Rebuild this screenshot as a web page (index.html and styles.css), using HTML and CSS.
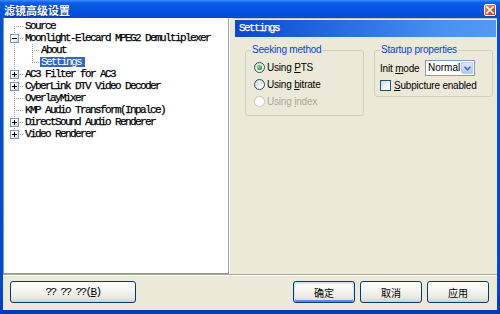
FILE: index.html
```html
<!DOCTYPE html>
<html lang="zh-CN">
<head>
    <meta charset="UTF-8">
    <title>滤镜高级设置</title>
    <link rel="stylesheet" href="styles.css">
</head>
<body>
<div class="window">
    <div class="titlebar">
        <span class="title">滤镜高级设置</span>
        <span class="close">
            <svg width="8" height="8" viewBox="0 0 8 8"><path d="M1 1L7 7M7 1L1 7" stroke="#fff" stroke-width="1.6" stroke-linecap="square"/></svg>
        </span>
    </div>
    <div class="frame">
        <div class="main">
            <div class="tree">
                <div class="row"><span class="lead first"></span><span class="label">Source</span></div>
                <div class="row"><span class="lead full"><span class="box"></span></span><span class="label">Moonlight-Elecard MPEG2 Demultiplexer</span></div>
                <div class="row"><span class="indent"></span><span class="lead full sub"></span><span class="label">About</span></div>
                <div class="row"><span class="indent"></span><span class="lead last sub"></span><span class="label selected">Settings</span></div>
                <div class="row"><span class="lead full"><span class="box plus"></span></span><span class="label">AC3 Filter for AC3</span></div>
                <div class="row"><span class="lead full"><span class="box plus"></span></span><span class="label">CyberLink DTV Video Decoder</span></div>
                <div class="row"><span class="lead full"></span><span class="label">OverlayMixer</span></div>
                <div class="row"><span class="lead full"></span><span class="label">KMP Audio Transform(Inpalce)</span></div>
                <div class="row"><span class="lead full"><span class="box plus"></span></span><span class="label">DirectSound Audio Renderer</span></div>
                <div class="row"><span class="lead last"><span class="box plus"></span></span><span class="label">Video Renderer</span></div>
            </div>
            <div class="split"></div>
            <div class="panel">
                <div class="panel-head">Settings</div>
                <div class="panel-body">
                    <fieldset class="group">
                        <legend>Seeking method</legend>
                        <div class="opt"><span class="radio on"></span><span>Using <u>P</u>TS</span></div>
                        <div class="opt"><span class="radio"></span><span>Using <u>b</u>itrate</span></div>
                        <div class="opt disabled"><span class="radio"></span><span>Using <u>i</u>ndex</span></div>
                    </fieldset>
                    <fieldset class="group startup">
                        <legend>Startup properties</legend>
                        <div class="opt tall">
                            <span class="field-label">Init <u>m</u>ode</span>
                            <span class="select">
                                <span class="value">Normal</span>
                                <span class="drop">
                                    <svg width="7" height="5" viewBox="0 0 7 5"><path d="M0.5 0.8L3.5 3.8L6.5 0.8" fill="none" stroke="#4D6185" stroke-width="1.5"/></svg>
                                </span>
                            </span>
                        </div>
                        <div class="opt short"><span class="check"></span><span><u>S</u>ubpicture enabled</span></div>
                    </fieldset>
                </div>
            </div>
        </div>
        <div class="footer">
            <button class="btn wide">?? ?? ??(<u>B</u>)</button>
            <button class="btn default">确定</button>
            <button class="btn">取消</button>
            <button class="btn">应用</button>
        </div>
    </div>
</div>
</body>
</html>
```
FILE: styles.css
```css
body {
    margin: 0;
    font-family: "Liberation Sans", Arial, sans-serif;
}
.window {
    width: 500px;
    height: 314px;
    display: flex;
    flex-direction: column;
    background: linear-gradient(to bottom, #0450D9, #0348D2 90%, #003BB8);
}
.titlebar {
    height: 18px;
    box-sizing: border-box;
    padding: 2px 4px 0 4px;
    display: flex;
    align-items: center;
    justify-content: space-between;
    background: linear-gradient(to bottom, #3A8CFF 0, #0A5CEB 3px, #0452DE 60%, #034BD6 100%);
}
.title {
    color: #fff;
    font-family: "Noto Sans CJK SC", sans-serif;
    font-weight: bold;
    font-size: 11px;
    line-height: 14px;
    text-shadow: 1px 1px 0 #0A2F8F;
}
.close {
    width: 12px;
    height: 12px;
    box-sizing: border-box;
    border: 1px solid #fff;
    border-radius: 2px;
    background: linear-gradient(135deg, #F29A7C, #DC4F25 60%, #C8391A);
    display: flex;
    align-items: center;
    justify-content: center;
}
.frame {
    flex: 1;
    margin: 0 3px 4px 3px;
    background: #ECE9D8;
    display: flex;
    flex-direction: column;
}
.main {
    height: 256px;
    display: flex;
}
/* tree */
.tree {
    width: 223px;
    background: #fff;
    border-left: 1px solid #7F9DB9;
    border-right: 1px solid #A0A0A0;
    border-bottom: 1px solid #7F9DB9;
    padding: 2px 0 0 1px;
    font-family: "Liberation Mono", "Noto Sans CJK SC", monospace;
    font-size: 11px;
    letter-spacing: -1.6px;
    -webkit-text-stroke: 0.25px;
    color: #000;
}
.row {
    height: 12px;
    display: flex;
    align-items: center;
    white-space: nowrap;
}
.indent {
    width: 16px;
    height: 12px;
    background: repeating-linear-gradient(to bottom, #A0A0A0 0 1px, transparent 1px 2px) no-repeat 9px 0 / 1px 12px;
}
.lead {
    width: 19px;
    height: 12px;
    display: flex;
    align-items: center;
    background-image:
        repeating-linear-gradient(to bottom, #A0A0A0 0 1px, transparent 1px 2px),
        repeating-linear-gradient(to right, #A0A0A0 0 1px, transparent 1px 2px);
    background-repeat: no-repeat;
    background-position: 9px 0, 9px 6px;
    background-size: 1px 12px, 10px 1px;
}
.lead.first {
    background-position: 9px 6px, 9px 6px;
    background-size: 1px 6px, 10px 1px;
}
.lead.last {
    background-size: 1px 6px, 10px 1px;
}
.lead.sub {
    background-position: 11px 0, 11px 6px;
    background-size: 1px 12px, 8px 1px;
}
.lead.last.sub {
    background-size: 1px 6px, 8px 1px;
}
.box {
    width: 9px;
    height: 9px;
    box-sizing: border-box;
    margin-left: 5px;
    border: 1px solid #7898B5;
    background:
        linear-gradient(#000, #000) center / 5px 1px no-repeat,
        linear-gradient(135deg, #fff 40%, #D8D4C8);
}
.box.plus {
    background:
        linear-gradient(#000, #000) center / 5px 1px no-repeat,
        linear-gradient(#000, #000) center / 1px 5px no-repeat,
        linear-gradient(135deg, #fff 40%, #D8D4C8);
}
.label {
    padding: 0 1px;
    line-height: 11px;
}
.label.selected {
    background: #316AC5;
    color: #fff;
    padding: 0 4px 0 1px;
    line-height: 10px;
    -webkit-text-stroke: 0;
}
.split {
    width: 3px;
    border-left: 1px solid #fff;
}
/* settings panel */
.panel {
    flex: 1;
    border-top: 1px solid #C8C5B5;
    padding: 1px 1px 0 2px;
}
.panel-head {
    height: 17px;
    line-height: 17px;
    padding-left: 4px;
    color: #fff;
    font-family: "Liberation Mono", monospace;
    font-size: 11px;
    letter-spacing: -1.6px;
    -webkit-text-stroke: 0.25px;
    background: linear-gradient(to right, #0B47D3, #2B70E4 45%, #4B90F2 80%, #5599F4);
}
.panel-body {
    display: flex;
    align-items: flex-start;
    gap: 10px;
    padding: 7px 0 0 10px;
    font-size: 10px;
    letter-spacing: -0.2px;
}
.group {
    width: 119px;
    box-sizing: border-box;
    margin: 0;
    padding: 3px 5px 5px 5px;
    border: 1px solid #D0D0BF;
    border-radius: 3px;
}
.group legend {
    color: #0046D5;
    padding: 0 1px;
    line-height: 12px;
}
.group.startup {
    padding-bottom: 3px;
}
.opt {
    height: 17px;
    display: flex;
    align-items: center;
    padding-left: 3px;
    color: #000;
}
.opt.tall {
    height: 18px;
    padding-left: 0;
}
.opt.short {
    height: 16px;
    padding-left: 0;
}
.opt.disabled {
    color: #ACA899;
}
.radio {
    width: 11px;
    height: 11px;
    box-sizing: border-box;
    border: 1px solid #1C5180;
    border-radius: 50%;
    margin-right: 2px;
    background: linear-gradient(135deg, #D6D4CA, #fff 80%);
    display: flex;
    align-items: center;
    justify-content: center;
}
.radio.on::after {
    content: "";
    width: 5px;
    height: 5px;
    border-radius: 50%;
    background: radial-gradient(circle at 35% 35%, #8DE68D, #21A121 70%);
}
.disabled .radio {
    border-color: #CAC8BB;
    background: #fff;
}
.field-label {
    width: 45px;
}
.select {
    width: 50px;
    height: 16px;
    box-sizing: border-box;
    border: 1px solid #7F9DB9;
    background: #fff;
    display: flex;
    font-size: 10px;
    letter-spacing: 0;
}
.select .value {
    flex: 1;
    padding-left: 2px;
    line-height: 14px;
}
.select .drop {
    width: 14px;
    margin: 1px;
    box-sizing: border-box;
    border: 1px solid #B9CBF5;
    border-radius: 2px;
    background: linear-gradient(to bottom, #E0EAFE, #C2D4FA 60%, #B1C6F6);
    display: flex;
    align-items: center;
    justify-content: center;
}
.check {
    width: 11px;
    height: 11px;
    box-sizing: border-box;
    border: 1px solid #1C5180;
    margin-right: 3px;
    background: linear-gradient(135deg, #D6D4CA, #fff 80%);
}
/* bottom buttons */
.footer {
    flex: 1;
    border-top: 1px solid #ACA899;
    box-shadow: inset 0 1px 0 #fff;
    padding: 6px 8px 0 7px;
    display: flex;
    align-items: flex-start;
    gap: 5px;
}
.btn {
    width: 62px;
    height: 22px;
    padding: 0;
    border: 1px solid #003C74;
    border-radius: 3px;
    background: linear-gradient(to bottom, #FFFFFF, #F4F4F0 45%, #E8E7E0 80%, #D6D0C5);
    font-family: "Noto Sans CJK SC", sans-serif;
    font-size: 10px;
    color: #000;
}
.btn.wide {
    width: 126px;
    margin-right: auto;
    font-family: "Liberation Mono", "Noto Sans CJK SC", monospace;
    font-size: 11px;
    letter-spacing: -1.6px;
}
.btn.default {
    box-shadow: inset 0 1px 0 1px #CEE7FF, inset 0 -1px 0 1px #6982EE;
}
```
